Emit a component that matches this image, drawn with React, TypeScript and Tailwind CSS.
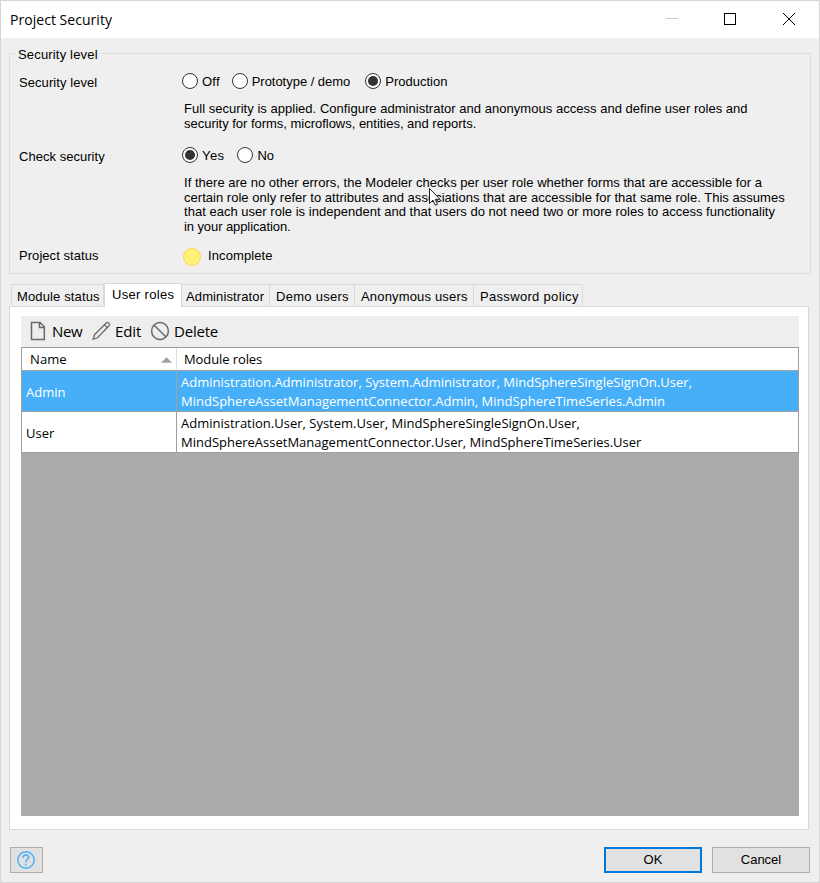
import type { ReactNode } from "react";

const sans = "font-['Liberation_Sans',Arial,sans-serif]";
const segoe = "font-['Open_Sans','Noto_Sans',sans-serif]";

function Radio({ label, checked = false, className = "", textClass = "" }: { label: string; checked?: boolean; className?: string; textClass?: string }) {
  return (
    <label className={`flex h-4 items-center ${className}`}>
      <svg width="16" height="16" viewBox="0 0 16 16" className="mr-1 shrink-0">
        <circle cx="8" cy="8" r="7.5" fill="#fff" stroke="#333" />
        {checked && <circle cx="8" cy="8" r="5" fill="#333" />}
      </svg>
      <span className={`whitespace-nowrap ${textClass}`}>{label}</span>
    </label>
  );
}

function Tab({ children, className = "" }: { children: ReactNode; className?: string }) {
  return (
    <div className={`h-[21px] shrink-0 whitespace-nowrap border-t border-r border-[#d9d9d9] pt-[4px] leading-[15px] ${className}`}>
      {children}
    </div>
  );
}

function Line({ children, className = "" }: { children: ReactNode; className?: string }) {
  return (
    <div className="whitespace-nowrap">
      <span className={className}>{children}</span>
    </div>
  );
}

export default function App() {
  return (
    <div className={`relative flex h-[883px] w-[820px] flex-col overflow-hidden border border-[#d5d5d5] bg-[#efefef] text-[13px] leading-[15px] text-black ${sans}`}>
      <header className="flex h-[37px] shrink-0 items-center bg-white">
        <h1 className={`ml-[9px] -mt-[1px] text-[14px] font-normal tracking-[0.04px] ${segoe}`}>Project Security</h1>
        <svg className="-mt-[1px] ml-auto mr-[22px]" width="134" height="14" viewBox="0 0 134 14" fill="none" shapeRendering="crispEdges">
          <path d="M3 6.500h12" stroke="#c8c8c8" />
          <path d="M61.500 1.500h11v11h-11z" stroke="#000" />
          <path d="M120 1l12 12M132 1l-12 12" stroke="#000" shapeRendering="auto" />
        </svg>
      </header>

      <section className="ml-2 mt-[15px] flex h-[221px] w-[802px] shrink-0 flex-col border border-[#dcdcdc]">
        <div className="-mt-[7px] ml-[6px] h-[15px] w-[84px] shrink-0 bg-[#efefef] pl-[2px]">
          <Line className="tracking-[0.17px]">Security level</Line>
        </div>
        <div className="mt-[11px] flex h-[74px] shrink-0">
          <div className="ml-[9px] mt-[2px] w-[163px] tracking-[0.07px]">Security level</div>
          <div>
            <div className="flex">
              <Radio label="Off" textClass="tracking-[0.2px]" />
              <Radio label="Prototype / demo" className="ml-3" textClass="-tracking-[0.03px]" />
              <Radio label="Production" checked className="ml-[15px]" />
            </div>
            <div className="ml-[2px] mt-[12px]">
              <Line className="tracking-[0.03px]">Full security is applied. Configure administrator and anonymous access and define user roles and</Line>
              <Line className="-tracking-[0.02px]">security for forms, microflows, entities, and reports.</Line>
            </div>
          </div>
        </div>
        <div className="flex h-[101px] shrink-0">
          <div className="ml-[9px] mt-[2px] w-[163px] tracking-[0.03px]">Check security</div>
          <div>
            <div className="flex">
              <Radio label="Yes" checked textClass="tracking-[0.4px]" />
              <Radio label="No" className="ml-[13px]" />
            </div>
            <div className="ml-[2px] mt-[13px] leading-[14.67px]">
              <Line className="tracking-[0.02px]">If there are no other errors, the Modeler checks per user role whether forms that are accessible for a</Line>
              <Line className="tracking-[0.025px]">certain role only refer to attributes and associations that are accessible for that same role. This assumes</Line>
              <Line className="tracking-[0.02px]">that each user role is independent and that users do not need two or more roles to access functionality</Line>
              <Line className="-tracking-[0.09px]">in your application.</Line>
            </div>
          </div>
        </div>
        <div className="flex">
          <div className="ml-[9px] w-[164px] tracking-[0.05px]">Project status</div>
          <div className="h-[18px] w-[18px] rounded-full border border-[#ffd83c] bg-[#fff27a]" />
          <div className="ml-[7px] tracking-[0.1px]">Incomplete</div>
        </div>
      </section>

      <nav className="ml-[10px] mt-[9px] flex h-[23px] shrink-0 items-end">
        <Tab className="mb-[1px] w-[93px] border-l pl-[5px] tracking-[0.13px]">Module status</Tab>
        <div className="z-10 -mb-[1px] h-[24px] w-[78px] shrink-0 whitespace-nowrap border border-b-0 border-[#d9d9d9] bg-white pl-[7px] pt-[3px] tracking-[0.3px]">User roles</div>
        <Tab className="mb-[1px] w-[88px] pl-[4px] tracking-[0.12px]">Administrator</Tab>
        <Tab className="mb-[1px] w-[85px] pl-[6px] tracking-[0.28px]">Demo users</Tab>
        <Tab className="mb-[1px] w-[119px] pl-[6px] tracking-[0.17px]">Anonymous users</Tab>
        <Tab className="mb-[1px] w-[109px] pl-[6px] tracking-[0.32px]">Password policy</Tab>
      </nav>

      <main className="ml-2 flex h-[524px] w-[800px] shrink-0 flex-col border border-[#d9d9d9] bg-white px-[11px] pt-[9px]">
        <div className={`flex h-[31px] w-[778px] items-center bg-[#eee] text-[15px] ${segoe}`}>
          <svg className="-mt-[2px] ml-[9px]" width="16" height="20" viewBox="0 0 16 20" fill="none" stroke="#6a6a6a" strokeWidth="1.500">
            <path d="M1.500 1.500h8.500l4.300 4.300v12.700H1.500zM9.500 2v4.500h4.500" />
          </svg>
          <span className="ml-[6px] w-[31px] tracking-[-0.3px]">New</span>
          <svg className="-mt-[1px] ml-[9px]" width="19" height="20" viewBox="0 0 19 20" fill="none" stroke="#6a6a6a" strokeWidth="1.300">
            <path d="M1.200 18.300l1.300-4.600L14.200 2q1.300-1.200 2.600.1t.2 2.600L5.500 16.800zM12.400 3.800l2.800 2.800" />
          </svg>
          <span className="ml-[4px] w-[27px] tracking-[-0.1px]">Edit</span>
          <svg className="-mt-[2px] ml-[8px]" width="20" height="20" viewBox="0 0 20 20" fill="none" stroke="#6a6a6a" strokeWidth="1.500">
            <circle cx="10" cy="10" r="8.400" />
            <path d="M4 4l12 12" />
          </svg>
          <span className="ml-[4px] tracking-[-0.2px]">Delete</span>
        </div>
        <div className={`flex h-[469px] w-[778px] shrink-0 flex-col border-t border-[#999] bg-[#ababab] ${segoe}`}>
          <div className="flex h-[23px] shrink-0 items-center border-x border-b border-[#a0a0a0] bg-white">
            <div className="flex h-[22px] w-[155px] items-center border-r border-[#dedede] pl-2">
              <span className="tracking-[0.1px]">Name</span>
              <svg className="ml-auto mr-1 mt-[1px]" width="11" height="6" viewBox="0 0 12 6">
                <path d="M6 0l6 6H0z" fill="#a0a0a0" />
              </svg>
            </div>
            <span className="ml-[7px] tracking-[-0.1px]">Module roles</span>
          </div>
          <div className="flex h-[41px] shrink-0 border-x border-b border-[#a0a0a0] bg-[#47aff8] leading-[19px] text-white">
            <div className="flex w-[155px] items-center border-r border-[#a0a0a0] pl-1 pt-[2px]">Admin</div>
            <div className="pl-[4px] pt-[2px]">
              <Line className="tracking-[0.01px]">Administration.Administrator, System.Administrator, MindSphereSingleSignOn.User,</Line>
              <Line className="tracking-[0.02px]">MindSphereAssetManagementConnector.Admin, MindSphereTimeSeries.Admin</Line>
            </div>
          </div>
          <div className="flex h-[41px] shrink-0 border-x border-b border-[#a0a0a0] bg-white leading-[19px]">
            <div className="flex w-[155px] items-center border-r border-[#a0a0a0] pl-1 pt-[2px]">User</div>
            <div className="pl-[4px] pt-[2px]">
              <Line>Administration.User, System.User, MindSphereSingleSignOn.User,</Line>
              <Line>MindSphereAssetManagementConnector.User, MindSphereTimeSeries.User</Line>
            </div>
          </div>
        </div>
      </main>

      <footer className="mt-[17px] flex h-[26px] shrink-0 pl-[9px]">
        <button className="flex w-[33px] items-center justify-center border border-[#adadad] bg-[#e1e1e1] pr-[1px]">
          <svg width="18" height="18" viewBox="0 0 18 18" fill="none" stroke="#47aff8" strokeWidth="1.400">
            <circle cx="9" cy="9" r="8.200" />
            <path d="M6.300 7V6.300Q6.300 4 9 4t2.700 2.300Q11.700 7.500 10.400 8.400T9 10.300v1.200M9 12.800v1.700" />
          </svg>
        </button>
        <button className="ml-[561px] w-[98px] border-2 border-[#0078d7] bg-[#e1e1e1] pb-[2px]">OK</button>
        <button className="ml-[10px] w-[98px] border border-[#adadad] bg-[#e1e1e1] pb-[2px]">Cancel</button>
      </footer>

      <svg className="absolute left-[427px] top-[186px]" width="13" height="20" viewBox="0 0 13 20">
        <path d="M1.500 1.500v15l3.500-3.300 2.200 5 2.300-1-2.200-4.900H12z" fill="#fff" stroke="#1a1a2a" strokeWidth="1" />
      </svg>
    </div>
  );
}
